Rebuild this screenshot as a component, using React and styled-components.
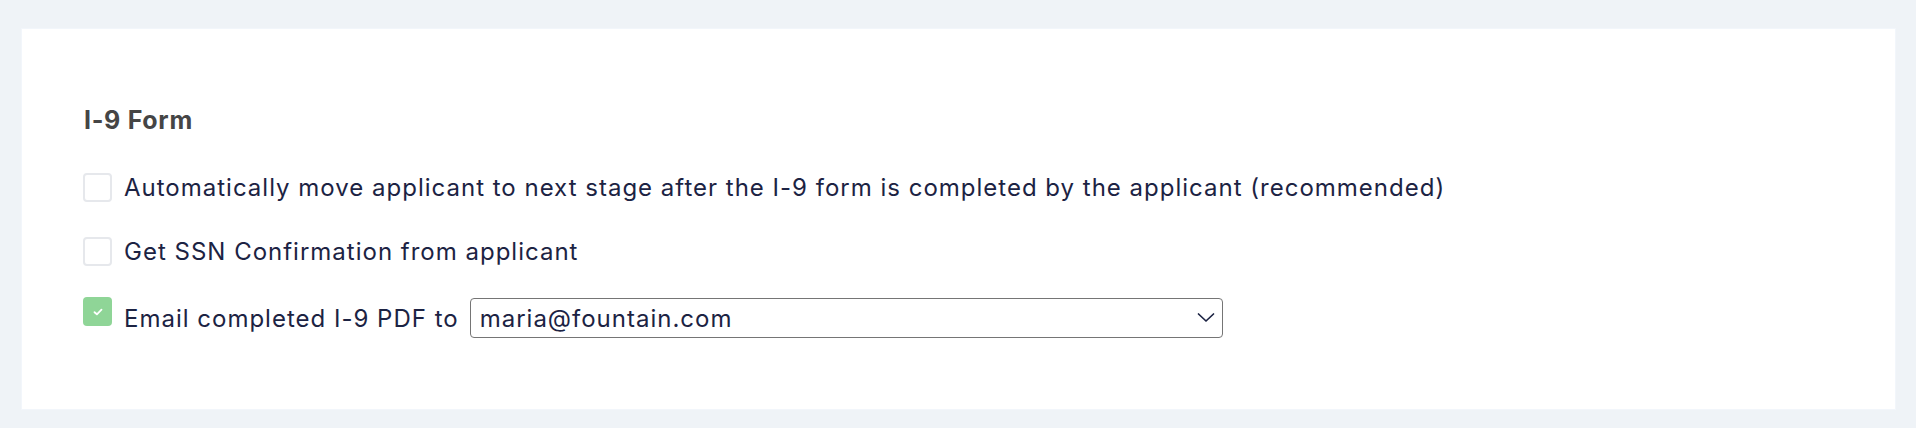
import React, { useState } from 'react';
import styled, { createGlobalStyle } from 'styled-components';

const GlobalStyle = createGlobalStyle`
	html, body {
		margin: 0;
		padding: 0;
		background: #eff3f7;
	}
	body {
		font-family: Inter, 'Liberation Sans', sans-serif;
	}
`;

const Page = styled.div`
	padding: 28px 20px 18px 21px;
	min-height: 428px;
	box-sizing: border-box;
`;

const Card = styled.section`
	background: #fff;
	border: 1px solid #f2f6fb;
	padding: 77px 61px 71px 61px;
`;

const Title = styled.h2`
	margin: 0 0 38px 0;
	font-size: 25px;
	font-weight: 700;
	line-height: 29px;
	color: #454545;
	letter-spacing: 0.7px;
	padding-left: 1px;
`;

const Row = styled.label`
	display: flex;
	align-items: ${(p) => (p.$top ? 'flex-start' : 'center')};
	gap: 12px;
	margin-top: ${(p) => p.$mt || 0}px;
	font-size: 24px;
	letter-spacing: 1px;
	color: #1c2343;
	line-height: 29px;
`;

const Box = styled.span`
	flex: none;
	width: 29px;
	height: 29px;
	box-sizing: border-box;
	border-radius: 4px;
	border: ${(p) => (p.$checked ? 'none' : '2px solid #e6e8ec')};
	background: ${(p) => (p.$checked ? '#8fd597' : '#fff')};
	display: flex;
	align-items: center;
	justify-content: center;
`;

const Inline = styled.span`
	display: flex;
	align-items: center;
	gap: 11px;
	margin-top: 1px;
`;

const SelectWrap = styled.span`
	position: relative;
	display: inline-block;
	width: 753px;
	height: 40px;
`;

const Select = styled.select`
	appearance: none;
	width: 100%;
	height: 100%;
	box-sizing: border-box;
	border: 1.5px solid #757575;
	border-radius: 4px;
	background: #fff;
	padding: 0 40px 0 9px;
	font-family: inherit;
	font-size: 24px;
	letter-spacing: 1px;
	color: #1c2343;
	outline: none;
`;

const Chevron = styled.svg`
	position: absolute;
	right: 8px;
	top: 14px;
	pointer-events: none;
`;

const Check = () => (
	<svg width="10" height="8" viewBox="0 0 10 8">
		<path d="M1.5 4.2 L3.9 6.3 L8.5 1.7" fill="none" stroke="#fff" strokeWidth="1.8" strokeLinecap="round" strokeLinejoin="round" />
	</svg>
);

const App = () => {
	const [email, setEmail] = useState('maria@fountain.com');
	return (
		<Page>
			<GlobalStyle />
			<Card>
				<Title>I-9 Form</Title>
				<Row>
					<Box />
					Automatically move applicant to next stage after the I-9 form is completed by the applicant (recommended)
				</Row>
				<Row $mt={35}>
					<Box />
					Get SSN Confirmation from applicant
				</Row>
				<Row $mt={31} $top>
					<Box $checked>
						<Check />
					</Box>
					<Inline>
						Email completed I-9 PDF to
						<SelectWrap>
							<Select value={email} onChange={(e) => setEmail(e.target.value)}>
								<option>maria@fountain.com</option>
							</Select>
							<Chevron width="18" height="11" viewBox="0 0 18 11">
								<path d="M1.5 2 L9 9 L16.5 2" fill="none" stroke="#1c2343" strokeWidth="1.7" strokeLinecap="round" strokeLinejoin="round" />
							</Chevron>
						</SelectWrap>
					</Inline>
				</Row>
			</Card>
		</Page>
	);
};

export default App;
